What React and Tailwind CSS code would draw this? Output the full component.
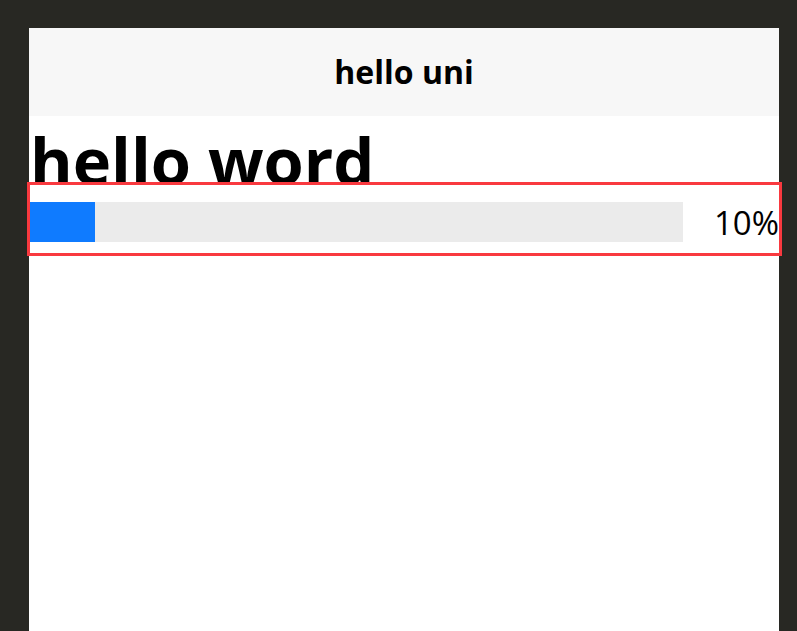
import React from 'react';

const ProgressRow = ({ percent }) => {
  return (
    <div className="relative ml-[1px] h-[68px] pt-[17px] flex items-start bg-white outline-[3px] outline-solid outline-[#f9393f]">
      <div className="w-[653px] h-[40px] bg-[#ebebeb]">
        <div className="h-full bg-[#0f7bff]" style={{ width: `${percent}%` }}></div>
      </div>
      <div className="flex-1 text-right text-[33px] leading-[40px] text-black pt-[1px]">{percent}%</div>
    </div>
  );
};

export default function App() {
  return (
    <div
      className="w-[797px] h-[631px] bg-[#282823] pt-[28px] pl-[29px] pr-[18px] overflow-hidden"
      style={{ fontFamily: '"Open Sans", "Noto Sans", sans-serif' }}
    >
      <div className="w-[750px] h-[603px] bg-white flex flex-col">
        <div className="h-[88px] bg-[#f7f7f7] flex items-center justify-center">
          <span className="text-[32px] font-bold text-black leading-none">hello uni</span>
        </div>
        <h1 className="h-[69px] text-[65px] font-bold leading-[88px] text-black pl-[1px] whitespace-nowrap">
          hello word
        </h1>
        <ProgressRow percent={10} />
      </div>
    </div>
  );
}
